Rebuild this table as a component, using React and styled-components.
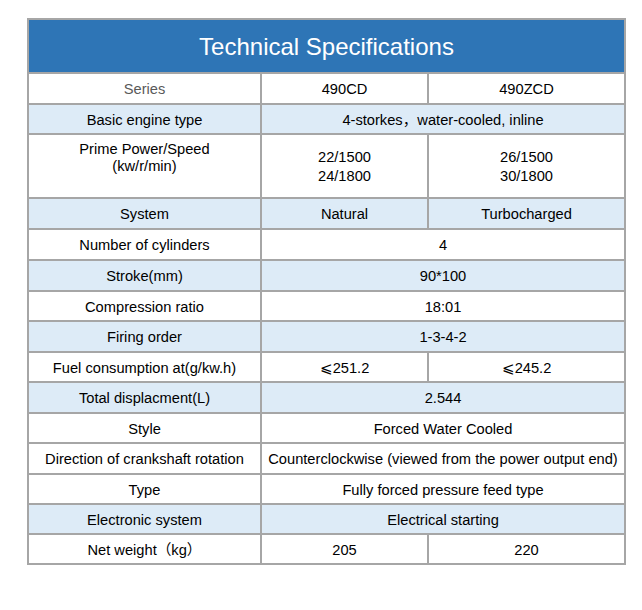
import React from 'react';
import styled, { createGlobalStyle } from 'styled-components';

const GlobalStyle = createGlobalStyle`
  body {
    margin: 0;
    background: #ffffff;
    font-family: "Liberation Sans", Arial, "Noto Sans CJK SC", sans-serif;
  }
`;

const Page = styled.div`
  padding: 18px 0 0 27px;
`;

const Sheet = styled.div`
  display: grid;
  grid-template-columns: 231px 165px 195px;
  gap: 2px;
  padding: 2px;
  width: 595px;
  background: #a6a6a6;
`;

const Title = styled.div`
  grid-column: 1 / span 3;
  display: flex;
  align-items: center;
  justify-content: center;
  background: #2e75b6;
  color: #ffffff;
  font-size: 24px;
  padding-top: 2px;
`;

const Cell = styled.div`
  grid-column: span ${props => props.span || 1};
  display: flex;
  flex-direction: column;
  align-items: center;
  justify-content: ${props => (props.top ? 'flex-start' : 'center')};
  padding-top: ${props => (props.top ? '6px' : '2px')};
  background: ${props => (props.shade ? '#ddebf7' : '#ffffff')};
  color: ${props => (props.muted ? '#595959' : '#000000')};
  font-size: 14.67px;
  line-height: 17px;
  text-align: center;
  white-space: nowrap;
`;

const Line = styled.span`
  display: block;
  line-height: ${props => props.lh || '17px'};
`;

const rows = [
  { label: 'Series', muted: true, cells: [{ text: '490CD' }, { text: '490ZCD' }], h: 29 },
  { label: 'Basic engine type', shade: true, cells: [{ text: '4-storkes，water-cooled, inline', span: 2 }], h: 28 },
  {
    label: ['Prime Power/Speed', '(kw/r/min)'],
    top: true,
    cells: [{ text: ['22/1500', '24/1800'] }, { text: ['26/1500', '30/1800'] }],
    h: 62
  },
  { label: 'System', shade: true, cells: [{ text: 'Natural' }, { text: 'Turbocharged' }], h: 29 },
  { label: 'Number of cylinders', cells: [{ text: '4', span: 2 }], h: 29 },
  { label: 'Stroke(mm)', shade: true, cells: [{ text: '90*100', span: 2 }], h: 29 },
  { label: 'Compression ratio', cells: [{ text: '18:01', span: 2 }], h: 28 },
  { label: 'Firing order', shade: true, cells: [{ text: '1-3-4-2', span: 2 }], h: 29 },
  { label: 'Fuel consumption at(g/kw.h)', cells: [{ text: '⩽251.2' }, { text: '⩽245.2' }], h: 28 },
  { label: 'Total displacment(L)', shade: true, cells: [{ text: '2.544', span: 2 }], h: 29 },
  { label: 'Style', cells: [{ text: 'Forced Water Cooled', span: 2 }], h: 28 },
  {
    label: 'Direction of crankshaft rotation',
    cells: [{ text: 'Counterclockwise (viewed from the power output end)', span: 2 }],
    h: 29
  },
  { label: 'Type', cells: [{ text: 'Fully forced pressure feed type', span: 2 }], h: 28 },
  { label: 'Electronic system', shade: true, cells: [{ text: 'Electrical starting', span: 2 }], h: 28 },
  { label: 'Net weight（kg）', cells: [{ text: '205' }, { text: '220' }], h: 28 }
];

const renderText = (text, lh) =>
  Array.isArray(text)
    ? text.map(t => (
        <Line key={t} lh={lh}>
          {t}
        </Line>
      ))
    : text;

export default function App() {
  const rowHeights = ['52px', ...rows.map(r => `${r.h}px`)].join(' ');

  return (
    <Page>
      <GlobalStyle />
      <Sheet style={{ gridTemplateRows: rowHeights }}>
        <Title>Technical Specifications</Title>
        {rows.map(row => (
          <React.Fragment key={Array.isArray(row.label) ? row.label[0] : row.label}>
            <Cell shade={row.shade} muted={row.muted} top={row.top}>
              {renderText(row.label)}
            </Cell>
            {row.cells.map((c, i) => (
              <Cell key={i} span={c.span} shade={row.shade}>
                {renderText(c.text, '19px')}
              </Cell>
            ))}
          </React.Fragment>
        ))}
      </Sheet>
    </Page>
  );
}
